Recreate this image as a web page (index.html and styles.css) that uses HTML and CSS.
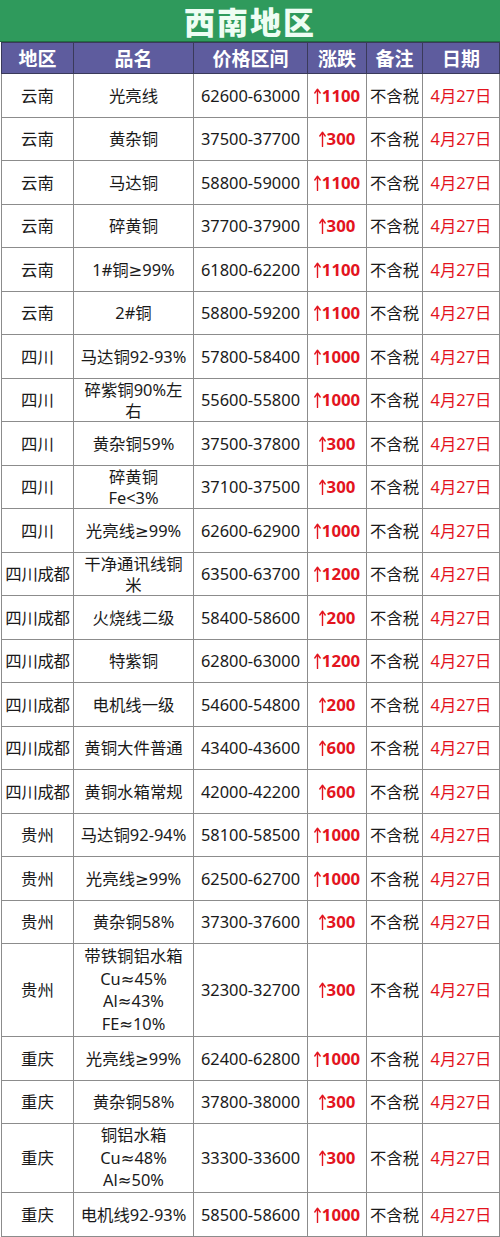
FILE: index.html
```html
<!DOCTYPE html>
<html lang="zh">
<head>
<meta charset="utf-8">
<link rel="stylesheet" href="styles.css">
</head>
<body>
<div class="sheet">
  <div class="title">西南地区</div>
  <table class="grid">
    <colgroup>
      <col class="c1"><col class="c2"><col class="c3"><col class="c4"><col class="c5"><col class="c6">
    </colgroup>
    <thead>
      <tr><th>地区</th><th>品名</th><th>价格区间</th><th>涨跌</th><th>备注</th><th>日期</th></tr>
    </thead>
    <tbody>
      <tr><td>云南</td><td>光亮线</td><td>62600-63000</td><td class="up"><svg class="ar" viewBox="0 0 7 16"><path d="M3.5 15.5V1.5M0.8 5L3.5 1.2L6.2 5"/></svg>1100</td><td>不含税</td><td class="date">4月27日</td></tr>
      <tr><td>云南</td><td>黄杂铜</td><td>37500-37700</td><td class="up"><svg class="ar" viewBox="0 0 7 16"><path d="M3.5 15.5V1.5M0.8 5L3.5 1.2L6.2 5"/></svg>300</td><td>不含税</td><td class="date">4月27日</td></tr>
      <tr><td>云南</td><td>马达铜</td><td>58800-59000</td><td class="up"><svg class="ar" viewBox="0 0 7 16"><path d="M3.5 15.5V1.5M0.8 5L3.5 1.2L6.2 5"/></svg>1100</td><td>不含税</td><td class="date">4月27日</td></tr>
      <tr><td>云南</td><td>碎黄铜</td><td>37700-37900</td><td class="up"><svg class="ar" viewBox="0 0 7 16"><path d="M3.5 15.5V1.5M0.8 5L3.5 1.2L6.2 5"/></svg>300</td><td>不含税</td><td class="date">4月27日</td></tr>
      <tr><td>云南</td><td>1#铜≥99%</td><td>61800-62200</td><td class="up"><svg class="ar" viewBox="0 0 7 16"><path d="M3.5 15.5V1.5M0.8 5L3.5 1.2L6.2 5"/></svg>1100</td><td>不含税</td><td class="date">4月27日</td></tr>
      <tr><td>云南</td><td>2#铜</td><td>58800-59200</td><td class="up"><svg class="ar" viewBox="0 0 7 16"><path d="M3.5 15.5V1.5M0.8 5L3.5 1.2L6.2 5"/></svg>1100</td><td>不含税</td><td class="date">4月27日</td></tr>
      <tr><td>四川</td><td>马达铜92-93%</td><td>57800-58400</td><td class="up"><svg class="ar" viewBox="0 0 7 16"><path d="M3.5 15.5V1.5M0.8 5L3.5 1.2L6.2 5"/></svg>1000</td><td>不含税</td><td class="date">4月27日</td></tr>
      <tr><td>四川</td><td class="two">碎紫铜90%左<br>右</td><td>55600-55800</td><td class="up"><svg class="ar" viewBox="0 0 7 16"><path d="M3.5 15.5V1.5M0.8 5L3.5 1.2L6.2 5"/></svg>1000</td><td>不含税</td><td class="date">4月27日</td></tr>
      <tr><td>四川</td><td>黄杂铜59%</td><td>37500-37800</td><td class="up"><svg class="ar" viewBox="0 0 7 16"><path d="M3.5 15.5V1.5M0.8 5L3.5 1.2L6.2 5"/></svg>300</td><td>不含税</td><td class="date">4月27日</td></tr>
      <tr><td>四川</td><td class="two">碎黄铜<br>Fe&lt;3%</td><td>37100-37500</td><td class="up"><svg class="ar" viewBox="0 0 7 16"><path d="M3.5 15.5V1.5M0.8 5L3.5 1.2L6.2 5"/></svg>300</td><td>不含税</td><td class="date">4月27日</td></tr>
      <tr><td>四川</td><td>光亮线≥99%</td><td>62600-62900</td><td class="up"><svg class="ar" viewBox="0 0 7 16"><path d="M3.5 15.5V1.5M0.8 5L3.5 1.2L6.2 5"/></svg>1000</td><td>不含税</td><td class="date">4月27日</td></tr>
      <tr><td class="wide">四川成都</td><td class="two">干净通讯线铜<br>米</td><td>63500-63700</td><td class="up"><svg class="ar" viewBox="0 0 7 16"><path d="M3.5 15.5V1.5M0.8 5L3.5 1.2L6.2 5"/></svg>1200</td><td>不含税</td><td class="date">4月27日</td></tr>
      <tr><td class="wide">四川成都</td><td>火烧线二级</td><td>58400-58600</td><td class="up"><svg class="ar" viewBox="0 0 7 16"><path d="M3.5 15.5V1.5M0.8 5L3.5 1.2L6.2 5"/></svg>200</td><td>不含税</td><td class="date">4月27日</td></tr>
      <tr><td class="wide">四川成都</td><td>特紫铜</td><td>62800-63000</td><td class="up"><svg class="ar" viewBox="0 0 7 16"><path d="M3.5 15.5V1.5M0.8 5L3.5 1.2L6.2 5"/></svg>1200</td><td>不含税</td><td class="date">4月27日</td></tr>
      <tr><td class="wide">四川成都</td><td>电机线一级</td><td>54600-54800</td><td class="up"><svg class="ar" viewBox="0 0 7 16"><path d="M3.5 15.5V1.5M0.8 5L3.5 1.2L6.2 5"/></svg>200</td><td>不含税</td><td class="date">4月27日</td></tr>
      <tr><td class="wide">四川成都</td><td>黄铜大件普通</td><td>43400-43600</td><td class="up"><svg class="ar" viewBox="0 0 7 16"><path d="M3.5 15.5V1.5M0.8 5L3.5 1.2L6.2 5"/></svg>600</td><td>不含税</td><td class="date">4月27日</td></tr>
      <tr><td class="wide">四川成都</td><td>黄铜水箱常规</td><td>42000-42200</td><td class="up"><svg class="ar" viewBox="0 0 7 16"><path d="M3.5 15.5V1.5M0.8 5L3.5 1.2L6.2 5"/></svg>600</td><td>不含税</td><td class="date">4月27日</td></tr>
      <tr><td>贵州</td><td>马达铜92-94%</td><td>58100-58500</td><td class="up"><svg class="ar" viewBox="0 0 7 16"><path d="M3.5 15.5V1.5M0.8 5L3.5 1.2L6.2 5"/></svg>1000</td><td>不含税</td><td class="date">4月27日</td></tr>
      <tr><td>贵州</td><td>光亮线≥99%</td><td>62500-62700</td><td class="up"><svg class="ar" viewBox="0 0 7 16"><path d="M3.5 15.5V1.5M0.8 5L3.5 1.2L6.2 5"/></svg>1000</td><td>不含税</td><td class="date">4月27日</td></tr>
      <tr><td>贵州</td><td>黄杂铜58%</td><td>37300-37600</td><td class="up"><svg class="ar" viewBox="0 0 7 16"><path d="M3.5 15.5V1.5M0.8 5L3.5 1.2L6.2 5"/></svg>300</td><td>不含税</td><td class="date">4月27日</td></tr>
      <tr class="tall4"><td>贵州</td><td class="multi">带铁铜铝水箱<br>Cu≈45%<br>Al≈43%<br>FE≈10%</td><td>32300-32700</td><td class="up"><svg class="ar" viewBox="0 0 7 16"><path d="M3.5 15.5V1.5M0.8 5L3.5 1.2L6.2 5"/></svg>300</td><td>不含税</td><td class="date">4月27日</td></tr>
      <tr><td>重庆</td><td>光亮线≥99%</td><td>62400-62800</td><td class="up"><svg class="ar" viewBox="0 0 7 16"><path d="M3.5 15.5V1.5M0.8 5L3.5 1.2L6.2 5"/></svg>1000</td><td>不含税</td><td class="date">4月27日</td></tr>
      <tr><td>重庆</td><td>黄杂铜58%</td><td>37800-38000</td><td class="up"><svg class="ar" viewBox="0 0 7 16"><path d="M3.5 15.5V1.5M0.8 5L3.5 1.2L6.2 5"/></svg>300</td><td>不含税</td><td class="date">4月27日</td></tr>
      <tr class="tall3"><td>重庆</td><td class="multi">铜铝水箱<br>Cu≈48%<br>Al≈50%</td><td>33300-33600</td><td class="up"><svg class="ar" viewBox="0 0 7 16"><path d="M3.5 15.5V1.5M0.8 5L3.5 1.2L6.2 5"/></svg>300</td><td>不含税</td><td class="date">4月27日</td></tr>
      <tr><td>重庆</td><td>电机线92-93%</td><td>58500-58600</td><td class="up"><svg class="ar" viewBox="0 0 7 16"><path d="M3.5 15.5V1.5M0.8 5L3.5 1.2L6.2 5"/></svg>1000</td><td>不含税</td><td class="date">4月27日</td></tr>
    </tbody>
  </table>
</div>
</body>
</html>
```

FILE: styles.css
```css
html, body {
  margin: 0;
  padding: 0;
  background: #ffffff;
}

.sheet {
  width: 500px;
  font-family: "Noto Sans", "DejaVu Sans", "Noto Sans CJK SC", sans-serif;
  color: #1a1a1a;
}

.title {
  height: 42px;
  padding-top: 1px;
  background: #2f9a5c;
  color: #eefdf3;
  font-family: "Noto Sans CJK SC", sans-serif;
  font-weight: 900;
  font-size: 31px;
  line-height: 40px;
  text-align: center;
  letter-spacing: 2px;
  border-bottom: 1px solid #1f6e40;
  box-sizing: border-box;
}

.grid {
  width: 498px;
  margin-left: 1px;
  border-collapse: collapse;
  table-layout: fixed;
}

.c1 { width: 72px; }
.c2 { width: 120px; }
.c3 { width: 114px; }
.c4 { width: 59px; }
.c5 { width: 56px; }
.c6 { width: 77px; }

.grid th {
  height: 30px;
  padding: 0;
  background: #5e5c9e;
  color: #ffffff;
  font-family: "Noto Sans CJK SC", sans-serif;
  font-weight: 700;
  font-size: 19px;
  line-height: 30px;
  text-align: center;
  border: 1px solid #3a3a5a;
}

.grid td {
  height: 42.5px;
  padding: 0;
  font-size: 16.4px;
  line-height: 21.5px;
  text-align: center;
  vertical-align: middle;
  border: 1px solid #8c8c8c;
  white-space: nowrap;
  overflow: hidden;
}

.grid td.wide {
  letter-spacing: -0.3px;
}

.grid td.two {
  line-height: 21px;
}

.grid td.multi {
  line-height: 22.5px;
}

.grid tr.tall4 td {
  height: 92px;
}

.grid tr.tall3 td {
  height: 68px;
}

.grid td.up {
  color: #e3141e;
  font-weight: 700;
  font-size: 16.8px;
}

.grid td.up .ar {
  width: 7px;
  height: 16px;
  margin-right: 1px;
  vertical-align: -2px;
  fill: none;
  stroke: #e3141e;
  stroke-width: 1.4;
  stroke-linecap: round;
  stroke-linejoin: round;
}

.grid td.date {
  color: #e3141e;
}
```
